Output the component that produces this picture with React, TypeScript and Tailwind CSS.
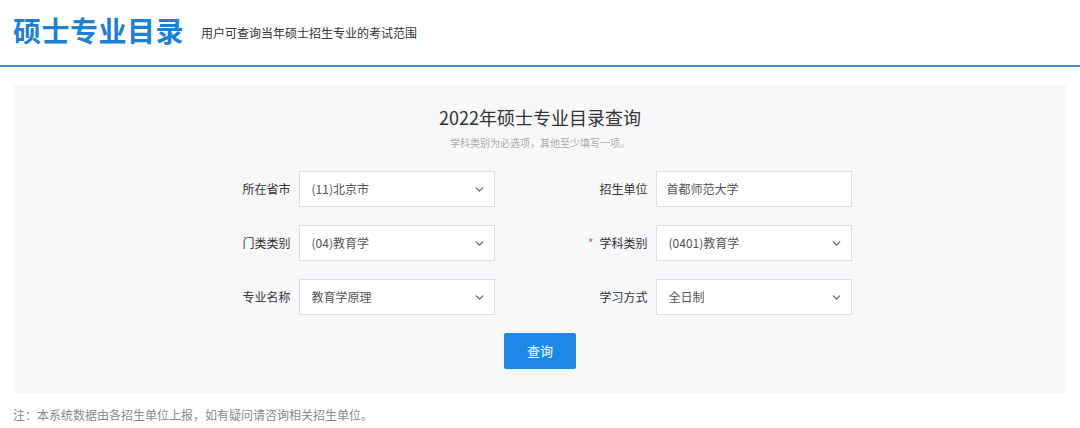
import { ChevronDown } from "lucide-react";

const font = "font-['Microsoft_YaHei','Noto_Sans_CJK_SC',sans-serif]";

const Select = ({ value }: { value: string }) => (
  <div className="flex h-[36px] w-[196px] items-center justify-between border border-[#dcdfe6] bg-white pl-[12px] pr-[8px] text-[12px] text-[#555]">
    <span>{value}</span>
    <ChevronDown size={13} strokeWidth={2.5} className="text-[#666]" />
  </div>
);

const Input = ({ value }: { value: string }) => (
  <div className="flex h-[36px] w-[196px] items-center border border-[#dcdfe6] bg-white pl-[10px] text-[12px] text-[#555]">
    {value}
  </div>
);

const Field = ({ label, required, children }: { label: string; required?: boolean; children: React.ReactNode }) => (
  <div className="flex items-center">
    <div className="flex w-[78px] items-center justify-end pr-[8px] text-[12px] text-[#333]">
      {required && <span className="mr-[6px] text-[#e55]">*</span>}
      {label}
    </div>
    {children}
  </div>
);

export default function App() {
  return (
    <div className={`h-[428px] w-[1080px] bg-white ${font}`}>
      <div className="flex h-[65px] items-center pb-[6px] pl-[13px]">
        <h1 className="text-[28px] font-bold tracking-[0.5px] text-[#1e7fd4]">硕士专业目录</h1>
        <span className="ml-[17px] mt-[6px] text-[12px] text-[#333]">用户可查询当年硕士招生专业的考试范围</span>
      </div>
      <div className="h-[2px] bg-[#4d8fb3]" />
      <div className="mx-[14px] mt-[18px] flex h-[308px] flex-col items-center bg-[#f7f8fa] pt-[19px]">
        <div className="text-[18px] text-[#333]">2022年硕士专业目录查询</div>
        <div className="mt-[4px] text-[10px] text-[#aaa]">学科类别为必选项，其他至少填写一项。</div>
        <div className="mr-[8px] mt-[21px] grid grid-cols-[274px_274px] gap-x-[83px] gap-y-[18px]">
          <Field label="所在省市"><Select value="(11)北京市" /></Field>
          <Field label="招生单位"><Input value="首都师范大学" /></Field>
          <Field label="门类类别"><Select value="(04)教育学" /></Field>
          <Field label="学科类别" required><Select value="(0401)教育学" /></Field>
          <Field label="专业名称"><Select value="教育学原理" /></Field>
          <Field label="学习方式"><Select value="全日制" /></Field>
        </div>
        <button className="mt-[18px] h-[36px] w-[72px] rounded-[2px] bg-[#1e88e5] text-[13px] text-white">查询</button>
      </div>
      <div className="ml-[13px] mt-[13px] text-[12px] text-[#888]">注：本系统数据由各招生单位上报，如有疑问请咨询相关招生单位。</div>
    </div>
  );
}
